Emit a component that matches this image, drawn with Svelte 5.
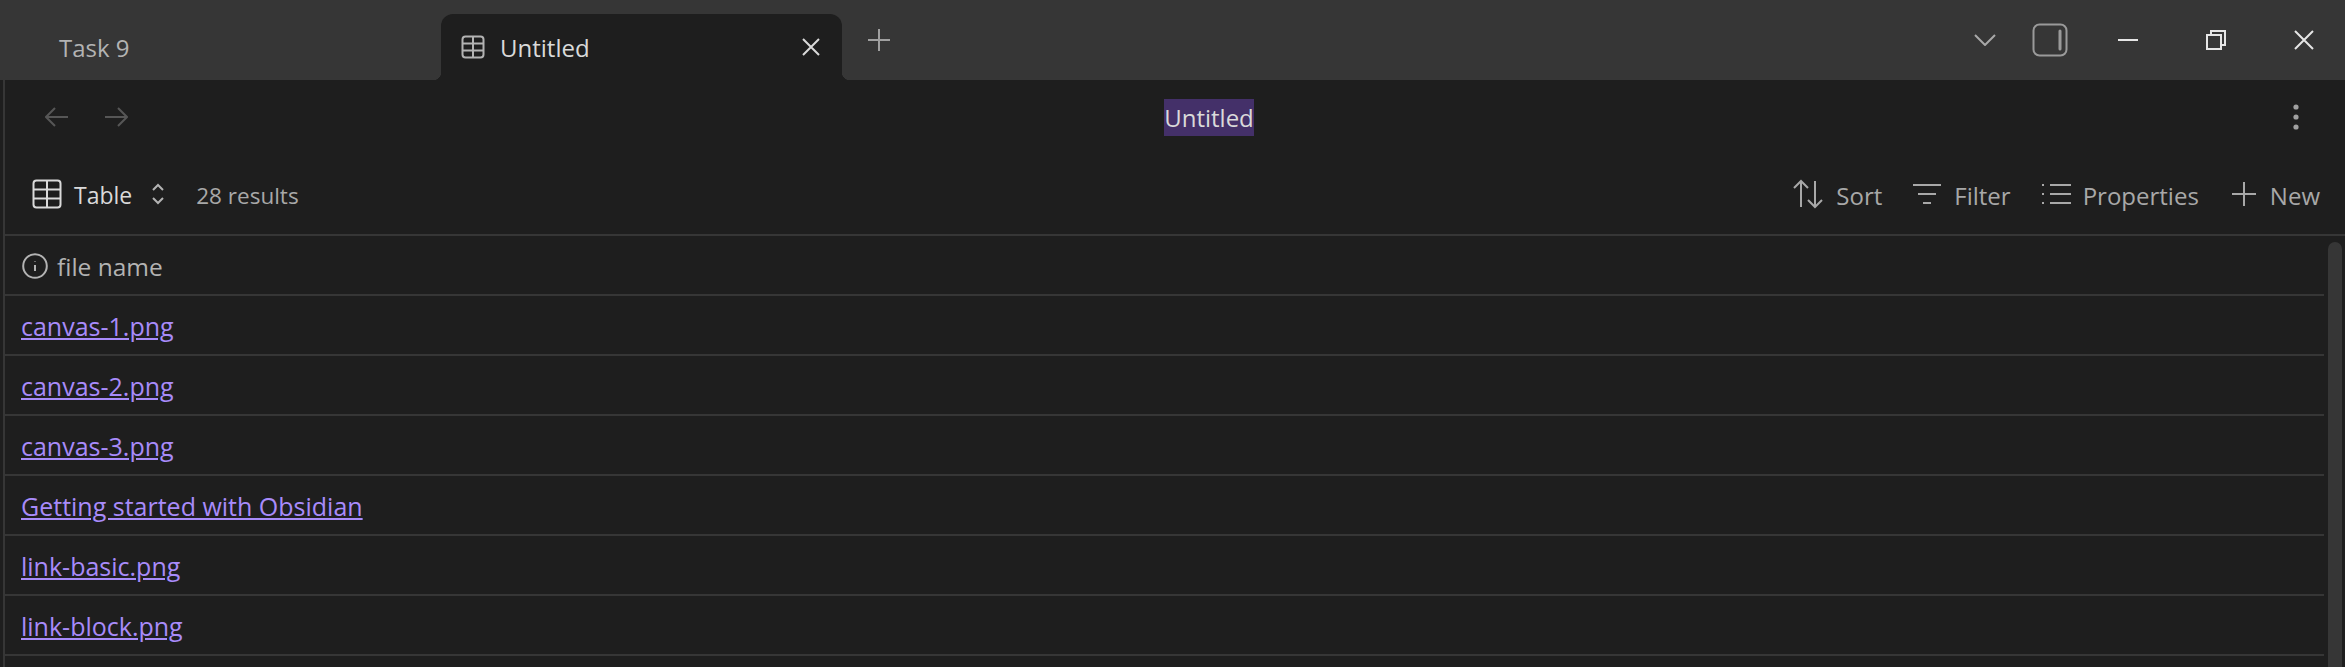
<script>
  const files = [
    "canvas-1.png",
    "canvas-2.png",
    "canvas-3.png",
    "Getting started with Obsidian",
    "link-basic.png",
    "link-block.png",
  ];
</script>

<div class="window">
  <header class="titlebar">
    <div class="tab">
      <span>Task 9</span>
    </div>
    <div class="tab active">
      <svg class="tab-icon" viewBox="0 0 24 24"><rect x="1.5" y="1.5" width="21" height="21" rx="3" /><path d="M1.5 8.5h21M1.5 15.5h21M12 1.5v21" /></svg>
      <span class="tab-title">Untitled</span>
      <svg class="tab-close" viewBox="0 0 20 20"><path d="M2 2l16 16M18 2L2 18" /></svg>
    </div>
    <svg class="new-tab" viewBox="0 0 24 24"><path d="M12 1v22M1 12h22" /></svg>
    <div class="spacer"></div>
    <svg class="tab-list" viewBox="0 0 22 12"><path d="M1 1l10 10L21 1" /></svg>
    <svg class="sidebar-toggle" viewBox="0 0 36 34"><rect x="1.5" y="1.5" width="33" height="31" rx="6" /><path d="M28 8v18" stroke-width="3" stroke-linecap="round" /></svg>
    <svg class="win min" viewBox="0 0 20 20"><path d="M0 10h20" /></svg>
    <svg class="win restore" viewBox="0 0 20 20"><rect x="1" y="5" width="14" height="14" /><path d="M5 5V1h14v14h-4" /></svg>
    <svg class="win close" viewBox="0 0 20 20"><path d="M1 1l18 18M19 1L1 19" /></svg>
  </header>

  <main class="pane">
    <div class="nav">
      <svg class="arrow" viewBox="0 0 24 20"><path d="M23 10H2M10 1l-9 9 9 9" /></svg>
      <svg class="arrow" viewBox="0 0 24 20"><path d="M1 10h21M14 1l9 9-9 9" /></svg>
      <div class="title"><span>Untitled</span></div>
      <svg class="more" viewBox="0 0 6 26"><circle cx="3" cy="3" r="2.6" /><circle cx="3" cy="13" r="2.6" /><circle cx="3" cy="23" r="2.6" /></svg>
    </div>

    <div class="toolbar">
      <svg class="table-icon" viewBox="0 0 30 30"><rect x="1.5" y="1.5" width="27" height="27" rx="3" /><path d="M1.5 10.5h27M1.5 19.5h27M15 1.5v27" /></svg>
      <span class="view-name">Table</span>
      <svg class="updown" viewBox="0 0 16 22"><path d="M3 7l5-5 5 5M3 15l5 5 5-5" /></svg>
      <span class="count">28 results</span>
      <div class="spacer"></div>
      <button class="action sort">
        <svg viewBox="0 0 32 30" width="32" height="30"><path d="M9 28V2M2 9l7-7 7 7M23 2v26M16 21l7 7 7-7" /></svg>
        <span>Sort</span>
      </button>
      <button class="action filter">
        <svg viewBox="0 0 30 22" width="30" height="22"><path d="M1 2h28M6 11h18M11 20h8" /></svg>
        <span>Filter</span>
      </button>
      <button class="action props">
        <svg viewBox="0 0 30 22" width="30" height="22"><path d="M9 2h21M9 11h21M9 20h21M1 2h2M1 11h2M1 20h2" /></svg>
        <span>Properties</span>
      </button>
      <button class="action new">
        <svg viewBox="0 0 24 24" width="24" height="24"><path d="M12 0v24M0 12h24" /></svg>
        <span>New</span>
      </button>
    </div>

    <div class="content">
      <div class="table">
        <div class="row head">
          <svg class="info" viewBox="0 0 26 26"><circle cx="13" cy="13" r="11.8" /><path d="M13 18v-6M13 8v.4" /></svg>
          <span>file name</span>
        </div>
        {#each files as file}
          <div class="row"><a href="#top">{file}</a></div>
        {/each}
      </div>
      <div class="scrollbar"></div>
    </div>
  </main>
</div>

<style>
  :global(body) {
    background: #1e1e1e;
  }
  .window {
    display: flex;
    flex-direction: column;
    height: 667px;
    overflow: hidden;
    background: #1e1e1e;
    font-family: "Open Sans", "Noto Sans", sans-serif;
    font-size: 24px;
    color: #b3b3b3;
  }
  svg {
    flex: none;
    fill: none;
    stroke: currentColor;
    stroke-width: 2;
  }
  .spacer {
    flex: 1;
  }

  .titlebar {
    display: flex;
    align-items: center;
    height: 80px;
    flex: none;
    background: #363636;
  }
  .tab {
    display: flex;
    align-items: center;
    align-self: flex-end;
    height: 66px;
    width: 441px;
    padding-left: 59px;
    box-sizing: border-box;
  }
  .tab.active {
    position: relative;
    width: 401px;
    padding: 0 21px 0 20px;
    background: #1e1e1e;
    border-radius: 12px 12px 0 0;
    color: #dadada;
  }
  .tab.active::before,
  .tab.active::after {
    content: "";
    position: absolute;
    bottom: 0;
    width: 8px;
    height: 8px;
  }
  .tab.active::before {
    left: -8px;
    background: radial-gradient(circle at 0 0, transparent 8px, #1e1e1e 8.5px);
  }
  .tab.active::after {
    right: -8px;
    background: radial-gradient(circle at 100% 0, transparent 8px, #1e1e1e 8.5px);
  }
  .tab-icon {
    width: 24px;
    height: 24px;
    color: #b3b3b3;
  }
  .tab-title {
    flex: 1;
    margin-left: 15px;
  }
  .tab-close {
    width: 20px;
    height: 20px;
    color: #dadada;
  }
  .new-tab {
    width: 24px;
    height: 24px;
    margin-left: 25px;
    color: #a0a0a0;
  }
  .tab-list {
    width: 22px;
    height: 12px;
    color: #a8a8a8;
  }
  .sidebar-toggle {
    width: 36px;
    height: 34px;
    margin-left: 36px;
    color: #9a9a9a;
  }
  .win {
    width: 20px;
    height: 20px;
    color: #e6e6e6;
  }
  .min {
    margin-left: 50px;
  }
  .restore {
    margin-left: 68px;
  }
  .close {
    margin: 0 31px 0 68px;
  }

  .pane {
    flex: 1;
    display: flex;
    flex-direction: column;
    min-height: 0;
    margin-left: 3px;
    border-left: 2px solid #363636;
  }

  .nav {
    display: flex;
    align-items: center;
    gap: 35px;
    height: 74px;
    flex: none;
    padding: 0 46px 0 40px;
  }
  .arrow {
    width: 24px;
    height: 20px;
    color: #565656;
  }
  .title {
    flex: 1;
    text-align: center;
    margin-left: -3px;
    color: #dadada;
  }
  .title span {
    background: #443069;
    padding: 2px 0;
  }
  .more {
    width: 6px;
    height: 26px;
    fill: #a0a0a0;
    stroke: none;
  }

  .toolbar {
    display: flex;
    align-items: center;
    height: 80px;
    flex: none;
    padding: 0 25px 0 27px;
    border-bottom: 2px solid #363636;
  }
  .toolbar span {
    position: relative;
    top: 1px;
  }
  .table-icon {
    width: 30px;
    height: 30px;
    color: #dadada;
  }
  .view-name {
    margin-left: 12px;
    font-size: 23px;
    color: #dadada;
  }
  .updown {
    width: 16px;
    height: 22px;
    margin-left: 18px;
    color: #b3b3b3;
  }
  .count {
    margin-left: 30px;
    font-size: 22.5px;
    color: #a8a8a8;
  }
  .action {
    display: flex;
    align-items: center;
    gap: 12px;
    padding: 0;
    border: none;
    background: none;
    font: inherit;
    color: #a8a8a8;
  }
  .filter {
    margin-left: 30px;
  }
  .props {
    margin-left: 30px;
  }
  .new {
    margin-left: 33px;
    gap: 14px;
  }

  .content {
    flex: 1;
    display: flex;
    gap: 4px;
    min-height: 0;
    padding-right: 3px;
  }
  .table {
    flex: 1;
  }
  .row {
    display: flex;
    align-items: center;
    gap: 9px;
    height: 56px;
    padding: 2px 0 0 16px;
    border-bottom: 2px solid #363636;
    font-size: 25px;
  }
  .head {
    color: #b3b3b3;
    padding-left: 17px;
    font-size: 24.5px;
  }
  .info {
    width: 26px;
    height: 26px;
  }
  a {
    color: #a88bfa;
    text-decoration: underline;
  }
  .scrollbar {
    width: 14px;
    margin-top: 6px;
    background: #363636;
    border-radius: 7px 7px 0 0;
  }
</style>
